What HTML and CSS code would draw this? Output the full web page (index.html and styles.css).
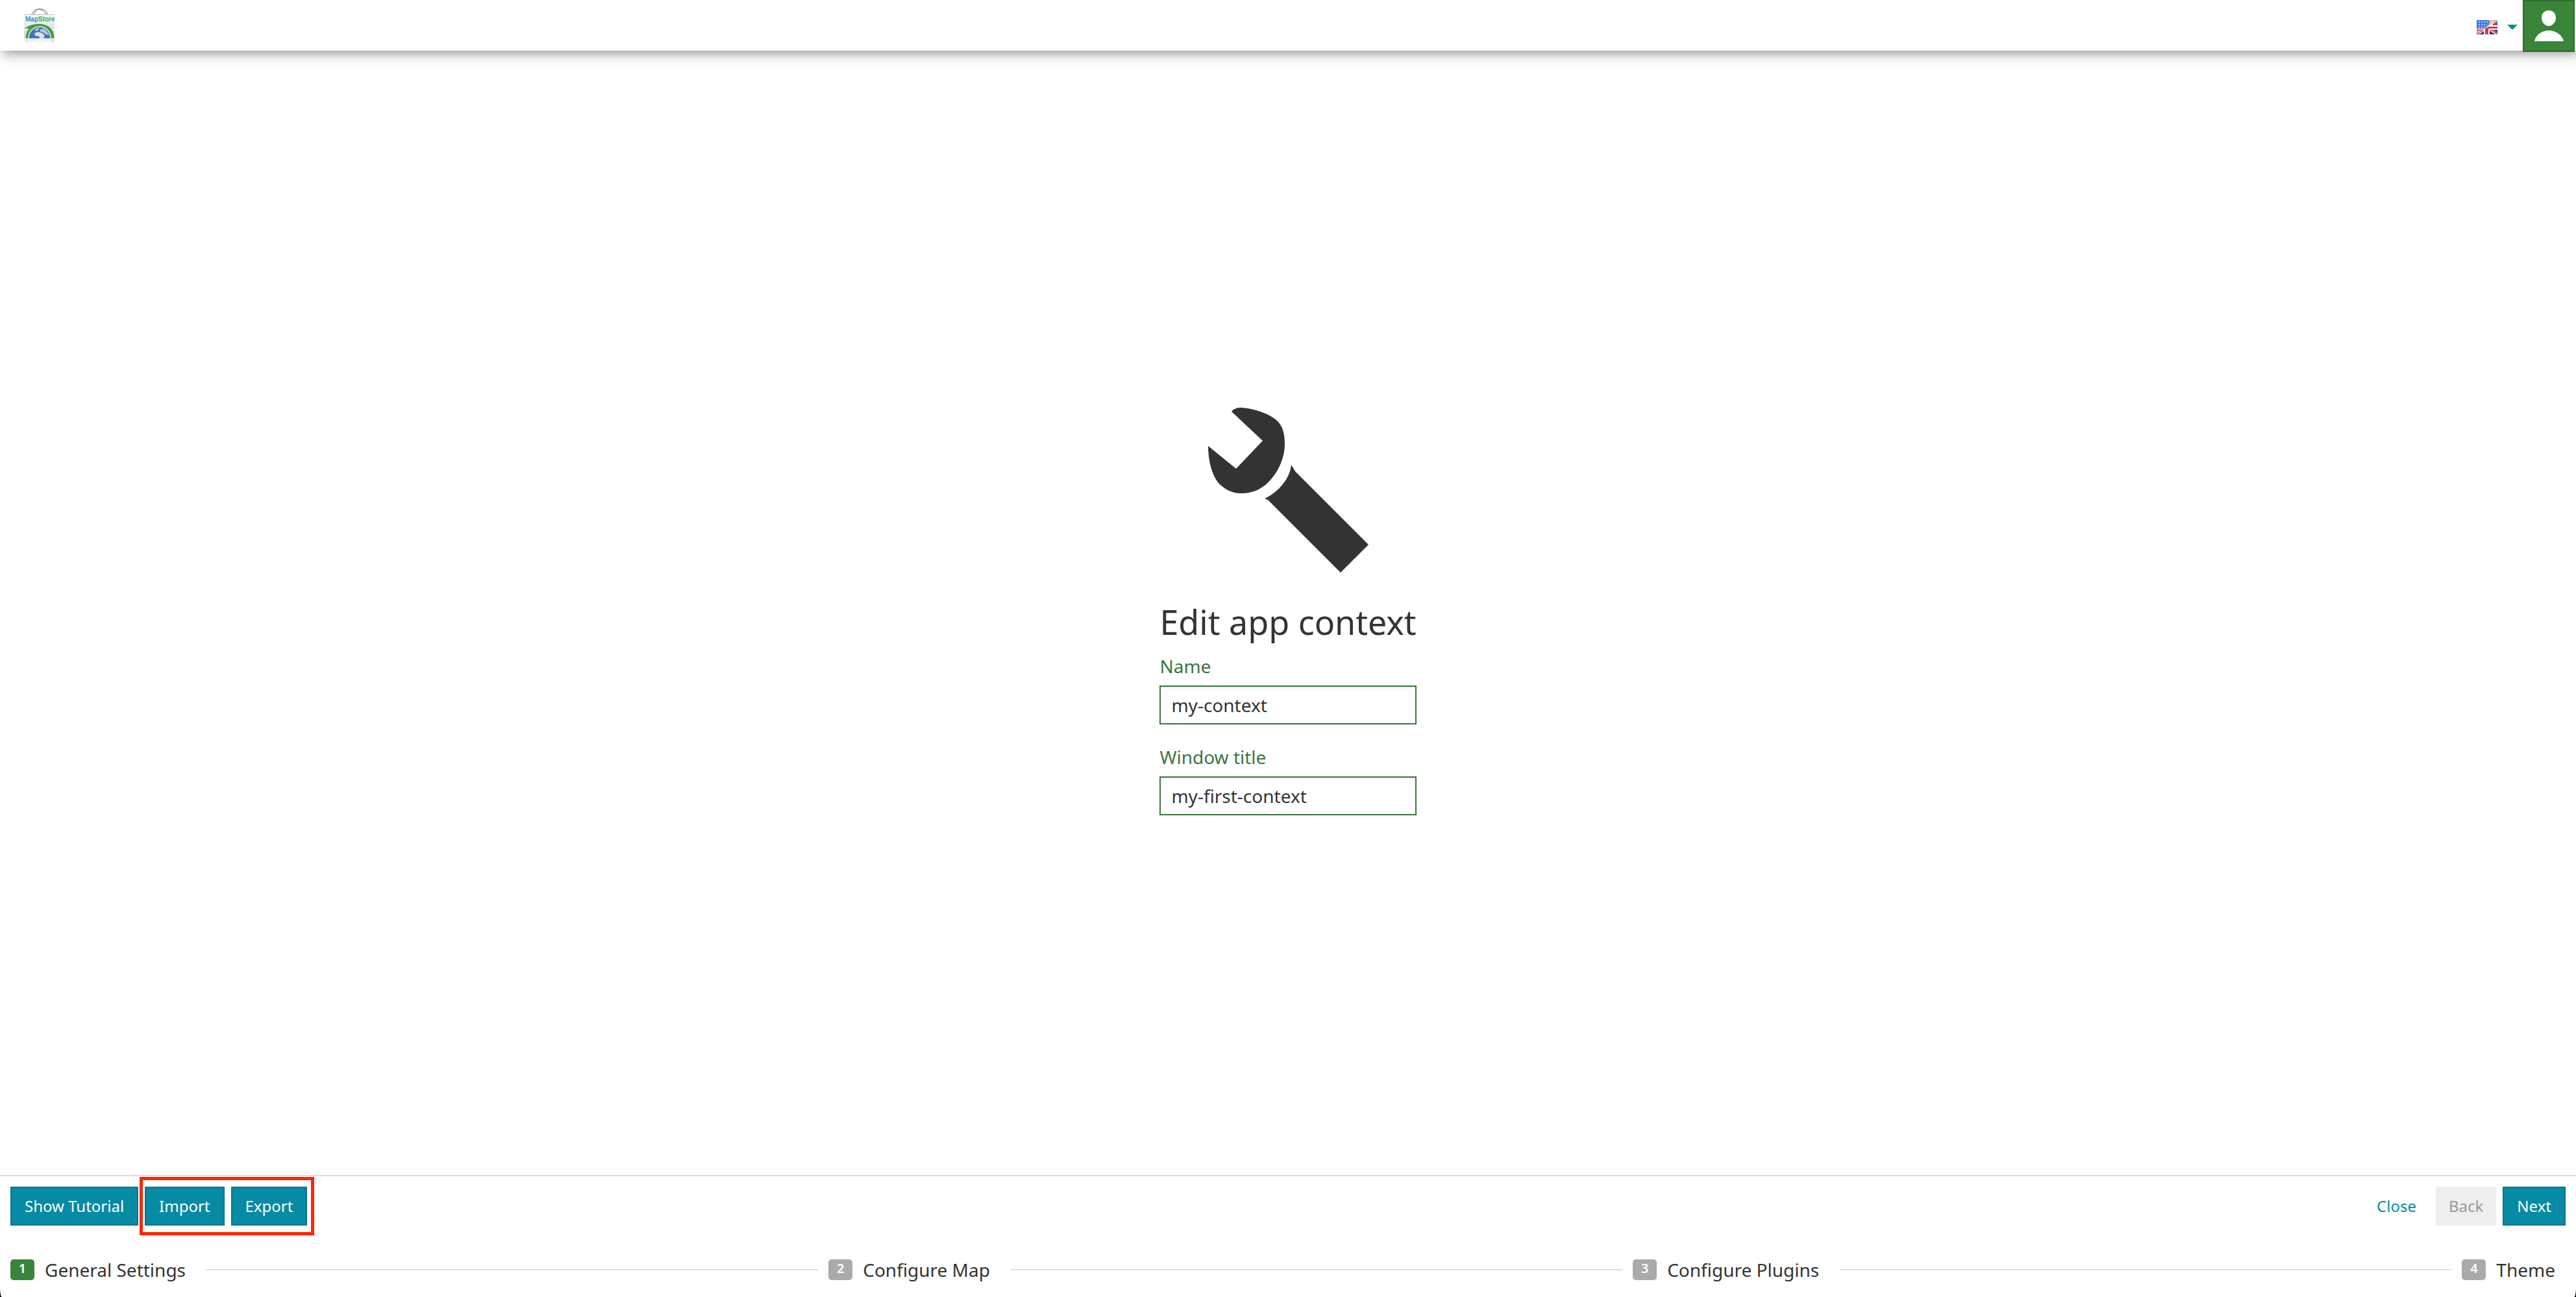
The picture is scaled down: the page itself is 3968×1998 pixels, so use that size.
FILE: index.html
```html
<!DOCTYPE html>
<html lang="en">
<head>
<meta charset="utf-8">
<title>MapStore - Edit app context</title>
<link rel="stylesheet" href="styles.css">
</head>
<body>
<div class="page">
  <header class="navbar">
    <a class="brand" href="#" aria-label="MapStore home">
      <svg width="50" height="60" viewBox="0 0 50 60" aria-hidden="true">
        <defs>
          <linearGradient id="bag" x1="0" y1="0" x2="0" y2="1">
            <stop offset="0" stop-color="#f8f8f8"/><stop offset="1" stop-color="#d4d4d4"/>
          </linearGradient>
          <linearGradient id="fade" x1="0" y1="0" x2="0" y2="1">
            <stop offset="0" stop-color="#e4eaec"/><stop offset="1" stop-color="#fff"/>
          </linearGradient>
          <clipPath id="bagClip"><rect x="1" y="12" width="47" height="37"/></clipPath>
        </defs>
        <path d="M13 12C15 7 19 4 26 4s10 4 11 8M16 12C18 7 21 4 24 4s8 3 11 8" fill="none" stroke="#666" stroke-width="1"/>
        <rect x="1" y="12" width="47" height="37" fill="url(#bag)"/>
        <path d="M1 12.500h47" stroke="#c4c4c4"/>
        <path d="M1 35.500h47" stroke="#fff" stroke-width="1"/>
        <g clip-path="url(#bagClip)">
          <path d="M2 34C8 29 18 26 28 27C42 29 48 38 47 49H43C43 38 36 32 26 32C14 32 8 40 8 49H4C4 43 5 38 9 34Z" fill="#35a23d"/>
          <circle cx="25" cy="48" r="18" fill="#d2d2d2"/>
          <circle cx="25" cy="48" r="16" fill="#3f74bb"/>
          <path d="M17 36l5-3 3 0-2 3-4 2zM26 35l5-1 5 4 4 6-6-1-3-3-5-1z" fill="#b9c6d6"/>
          <path d="M17 41l6-2 6 2 4 4-3 6h-4l-2-5-6-1z" fill="#dcdedb"/>
        </g>
        <rect x="1" y="49" width="47" height="9" fill="url(#fade)"/>
        <path d="M4 50h4l-1 6H5zM43 50h4l-1 6h-2z" fill="#d5ecd7"/>
        <text class="logo-text" x="3" y="23"><tspan fill="#3294d1">Map</tspan><tspan fill="#3dae43">Store</tspan></text>
      </svg>
    </a>
    <div class="nav-actions">
      <button class="language" type="button" aria-label="Language: English">
        <svg width="32" height="22" viewBox="0 0 32 22" aria-hidden="true">
          <rect width="32" height="22" fill="#24337c"/>
          <path d="M16 0h7l9 6v3H17z" fill="#f7ddd8"/>
          <path d="M24 0h8v2l-5 4z" fill="#f3b49b"/>
          <path d="M25 6l7-4v6h-7z" fill="#5a64a0"/>
          <path d="M19 0l5 3-5 5z" fill="#f2a58f"/>
          <path d="M0 22l14-9M32 22L17 12" stroke="#f1e3ea" stroke-width="4"/>
          <path d="M32 21L20 14M0 22l10-7" stroke="#e34542" stroke-width="2"/>
          <path d="M13 8h19v7H20v7h-9v-9z" fill="#fff"/>
          <path d="M32 10H18l-5 3v9h5v-9h14z" fill="#e0392f"/>
          <path d="M0 0h19v7l-7 6H0z" fill="#3f78e8"/>
          <path d="M3 3h14M3 7h13M3 11h9" stroke="#b7d2fc" stroke-width="2" stroke-dasharray="2 2"/>
          <path d="M0 14h11M0 18h6" stroke="#f0c4c8" stroke-width="2"/>
          <path d="M0 16h9" stroke="#d66565" stroke-width="2"/>
          <path d="M0 0h32v22H0z" fill="none" stroke="#5d629d" stroke-opacity=".6"/>
        </svg>
        <svg width="16" height="8" viewBox="0 0 16 8" aria-hidden="true"><path d="M0 0h16L8 8z" fill="#078aa3"/></svg>
      </button>
      <button class="user" type="button" aria-label="User">
        <svg width="46" height="50" viewBox="0 0 46 50" aria-hidden="true">
          <path d="M23 1C30 1 34 6 34 12.500C34 19 29 25 23 25S12 19 12 12.500C12 6 16 1 23 1zM1 48.500C3 39 12 32 23 32S44 39 46 48.500z" fill="#fff"/>
        </svg>
      </button>
    </div>
  </header>

  <main class="content">
    <form class="context-form">
      <svg class="wrench" width="256" height="256" viewBox="0 0 256 256" aria-hidden="true">
        <path d="M41 6C45 1 50 0 56 0C74 1 101 9 113 22C121 31 123 43 123 56C123 75 115 95 103 109C91 124 75 132 56 132C42 132 30 126 20 115C10 102 5 80 5 59L48 94L89 51z"/>
        <path d="M133 88L139 98L252 211L209 254L98 143C96 141 94 141 92 140C112 131 131 110 133 88z"/>
      </svg>
      <h1>Edit app context</h1>
      <div class="field">
        <label for="name">Name</label>
        <input id="name" type="text" value="my-context" size="1">
      </div>
      <div class="field">
        <label for="window-title">Window title</label>
        <input id="window-title" type="text" value="my-first-context" size="1">
      </div>
    </form>
  </main>

  <footer class="footer">
    <div class="toolbar">
      <div class="group">
        <button class="btn primary" type="button">Show Tutorial</button>
        <div class="group highlighted">
          <button class="btn primary" type="button">Import</button>
          <button class="btn primary" type="button">Export</button>
        </div>
      </div>
      <div class="group">
        <button class="btn link" type="button">Close</button>
        <button class="btn" type="button" disabled>Back</button>
        <button class="btn primary" type="button">Next</button>
      </div>
    </div>
    <ol class="steps">
      <li class="active"><span class="badge">1</span><span class="title">General Settings</span></li>
      <li class="line" role="presentation"></li>
      <li><span class="badge">2</span><span class="title">Configure Map</span></li>
      <li class="line" role="presentation"></li>
      <li><span class="badge">3</span><span class="title">Configure Plugins</span></li>
      <li class="line" role="presentation"></li>
      <li><span class="badge">4</span><span class="title">Theme</span></li>
    </ol>
  </footer>
</div>
</body>
</html>
```

FILE: styles.css
```css
* {
  box-sizing: border-box;
}

html {
  background: #000;
}

body {
  margin: 0;
  font-family: "Noto Sans", sans-serif;
  font-size: 28px;
  line-height: 40px;
  color: #333;
}

.page {
  display: flex;
  flex-direction: column;
  min-height: 100vh;
  background: #fff;
  border-radius: 0 0 3px 3px / 0 0 14px 14px;
}

button,
input {
  margin: 0;
  font: inherit;
}

svg {
  display: block;
}

/* Top bar */
.navbar {
  display: flex;
  justify-content: space-between;
  height: 78px;
  background: #fff;
  box-shadow: 4px 4px 18px rgba(0, 0, 0, 0.45);
}

.brand {
  padding: 10px 36px;
}

.logo-text {
  font: bold 10px "Liberation Sans", sans-serif;
}

.nav-actions {
  display: flex;
  align-items: flex-start;
  padding-right: 2px;
}

.language {
  display: flex;
  align-items: center;
  gap: 15px;
  height: 84px;
  padding: 0 8px;
  background: none;
  border: 0;
}

.user {
  display: grid;
  place-items: center;
  width: 80px;
  height: 80px;
  padding: 0;
  background: #398439;
  border: 2px solid #2d6a2d;
}

/* Form */
.content {
  display: flex;
  flex: 1;
  align-items: center;
  justify-content: center;
}

.context-form {
  display: flex;
  flex-direction: column;
  padding-bottom: 4px;
}

.wrench {
  align-self: center;
  fill: #333;
}

h1 {
  margin: 38px 0 12px;
  font-size: 52px;
  font-weight: 400;
  line-height: 72px;
}

.field {
  display: flex;
  flex-direction: column;
  gap: 10px;
}

.field + .field {
  margin-top: 30px;
}

label {
  color: #3c763d;
}

input {
  width: 100%;
  height: 60px;
  padding: 0 16px;
  color: #333;
  background: #fff;
  border: 2px solid #3c763d;
  box-shadow: inset 0 2px 2px rgba(0, 0, 0, 0.075);
}

/* Bottom bar */
.footer {
  border-top: 2px solid #ddd;
}

.toolbar {
  display: flex;
  justify-content: space-between;
  padding: 16px;
}

.group {
  display: flex;
  gap: 10px;
}

.highlighted {
  position: relative;
}

.highlighted::after {
  position: absolute;
  inset: -15px -11px -15px -8px;
  border: 5px solid #ff2600;
  content: "";
  pointer-events: none;
}

.btn {
  height: 60px;
  padding: 0 20px;
  font-size: 24px;
  line-height: 36px;
  border: 0;
  background: #eee;
}

.btn:disabled {
  color: #999;
}

.btn.primary {
  color: #fff;
  background: #078aa3;
  border: 2px solid #06788e;
}

.btn.link {
  color: #078aa3;
  background: none;
}

.steps {
  display: flex;
  align-items: center;
  margin: 0;
  padding: 32px 16px 22px;
  list-style: none;
}

.steps li {
  display: flex;
  align-items: center;
}

.steps .line {
  flex: 1;
  height: 2px;
  margin: 0 16px;
  background: #ddd;
}

.badge {
  width: 37px;
  height: 32px;
  font-size: 20px;
  font-weight: 600;
  line-height: 28px;
  text-align: center;
  color: #fff;
  background: #aaa;
  border-radius: 5px;
}

.active .badge {
  background: #398439;
}

.title {
  padding: 0 16px;
}
```
